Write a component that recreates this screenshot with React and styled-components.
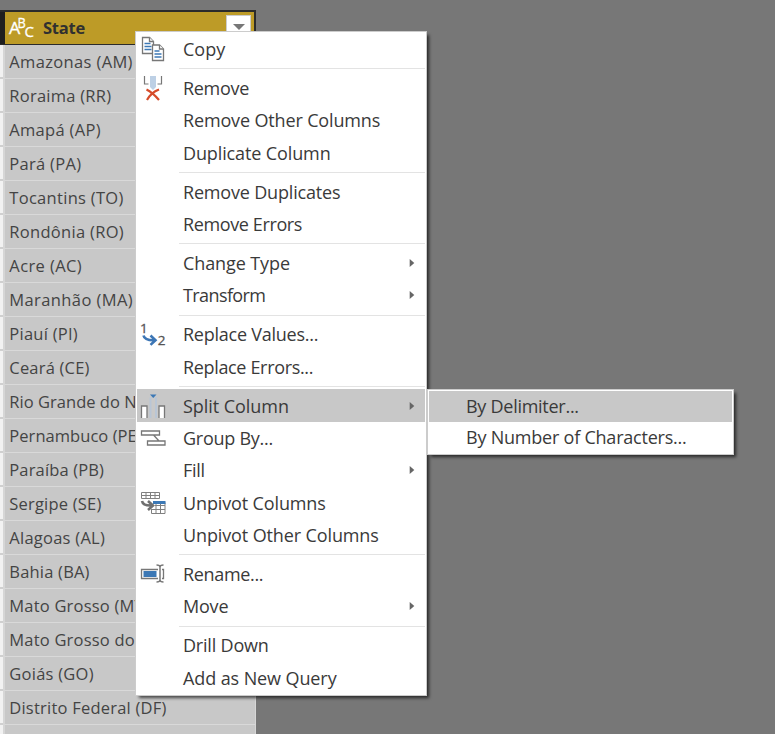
import React from 'react';
import styled, { createGlobalStyle } from 'styled-components';

const Global = createGlobalStyle`
  * { box-sizing: border-box; }
  body { margin: 0; background: #777; overflow: hidden; }
`;

const Screen = styled.main`
  position: relative;
  width: 775px;
  height: 734px;
  padding-top: 10px;
  overflow: hidden;
  background: #777;
  color: #3a3a3a;
  font-family: "Open Sans", "Noto Sans", sans-serif;
`;

const Grid = styled.section`
  display: grid;
  grid-template-columns: 3px 253px;
  width: 256px;
`;

const Header = styled.header`
  grid-column: 1 / -1;
  display: grid;
  grid-template-columns: 4px 1fr;
  height: 35px;
  border: 2px solid #2b2b2b;
  border-left-width: 0;
  border-bottom-width: 1px;
  background: #1f1f1f;
`;

const HeaderCell = styled.div`
  display: flex;
  align-items: center;
  margin-left: 1px;
  padding-left: 4px;
  background: #bd9b27;
  color: #303030;
  font-size: 16.5px;
  font-weight: 700;
  letter-spacing: -0.25px;
`;

const HeaderText = styled.span`
  margin-top: -2px;
`;

const TypeIcon = styled.svg`
  width: 25px;
  height: 24px;
  margin: -3px 9px 0 0;
  overflow: visible;
`;

const FilterButton = styled.button`
  align-self: flex-start;
  display: flex;
  justify-content: center;
  width: 25px;
  height: 25px;
  margin: 3px 3px 0 auto;
  padding: 8px 0 0;
  border: 1px solid #ccc;
  background: #fff;
`;

const Gutter = styled.div`
  height: 34px;
  background: #f2f2f2;
  border-bottom: 2px solid #d0d0d0;
`;

const Cell = styled.div`
  height: 34px;
  padding-left: 4.3px;
  border-left: 2px solid #d6d6d6;
  border-right: 1px solid #d6d6d6;
  border-bottom: 1px solid #d9d9d9;
  background: #c8c8c8;
  color: #444;
  font-size: 16.5px;
  font-weight: 500;
  line-height: 34px;
  letter-spacing: ${({ $track }) => $track || 0}px;
  white-space: pre;
`;

const Menu = styled.nav`
  position: absolute;
  left: 135px;
  top: 31px;
  width: 292px;
  height: 665px;
  padding: 1px;
  border: 1px solid #ccc;
  background: #fff;
  box-shadow: 3px 3px 3px -1px rgba(0, 0, 0, 0.65);
`;

const Item = styled.div`
  display: grid;
  grid-template-columns: 46px 1fr 16px;
  align-items: center;
  height: 32.4px;
  background: ${({ $active }) => ($active ? '#c8c8c8' : 'transparent')};
  font-size: 18px;
  line-height: 32px;
  white-space: nowrap;
`;

const Label = styled.span`
  letter-spacing: ${({ $track }) => $track || 0}px;
`;

const IconSlot = styled.span`
  display: flex;
  padding-left: 3px;
`;

const Divider = styled.div`
  height: 6.5px;
  margin-left: 42px;
  padding-top: 3px;
  &::before {
    content: '';
    display: block;
    height: 1px;
    background: #e3e3e3;
  }
`;

const Submenu = styled.nav`
  position: absolute;
  left: 427px;
  top: 389px;
  width: 307px;
  height: 66px;
  padding: 1px;
  border: 1px solid #ccc;
  background: #fff;
  box-shadow: 3px 3px 3px -1px rgba(0, 0, 0, 0.65);
`;

const SubItem = styled.div`
  height: 31px;
  padding-left: 37px;
  background: ${({ $active }) => ($active ? '#c8c8c8' : 'transparent')};
  font-size: 18px;
  line-height: 31px;
  letter-spacing: ${({ $track }) => $track || 0}px;
  white-space: nowrap;
`;

const Drawing = styled.svg`
  display: block;
  width: 26px;
  height: 28px;
  overflow: visible;
`;

const icons = {
  copy: (
    <g fill="#fff" stroke="#777" strokeWidth="1.3">
      <path d="M2.500 2.500h7l4 4v12h-11z" />
      <path d="M9.500 2.500v4h4" />
      <path d="M4.500 8.500h6M4.500 11.500h7M4.500 14.500h7" stroke="#3c78b5" />
      <path d="M12.500 10h7l4 4v11.500h-11z" />
      <path d="M19.500 10v4h4" />
      <path d="M14.500 16h5M14.500 19h7M14.500 22h7" stroke="#3c78b5" />
    </g>
  ),
  remove: (
    <g fill="none">
      <path d="M10 2h6v11l-3 3-3-3z" fill="#bdd0e5" />
      <path d="M4.500 2v8h4M21.500 2v8h-4" stroke="#777" strokeWidth="1.200" />
      <path d="M6.500 15.500q6 3 12.500 10.500M19 15.500q-8 3-12 10.500" stroke="#d64c2b" strokeWidth="2.200" />
    </g>
  ),
  replace: (
    <g>
      <g fill="#555" stroke="#555" strokeWidth=".3" fontSize="13.500">
        <text x="0" y="12.500">1</text>
        <text x="17.700" y="25">2</text>
      </g>
      <path d="M3.500 15.500q1 5 11 4.700M10.500 15.500l5 4.700-5 4.700" fill="none" stroke="#3d76b5" strokeWidth="2.600" />
    </g>
  ),
  split: (
    <g>
      <path d="M9.500 5.500h7.500v20.500h-7.500z" fill="#b9c6d6" />
      <path d="M11.500 6h3.500v20h-3.500z" fill="#c9c9c9" />
      <path d="M10 2.500h6.500l-3.250 3.500z" fill="#3c78b5" />
      <path d="M1.500 26V14h5.500V26M24.500 26V14h-5.500V26" fill="#fff" stroke="#777" strokeWidth="1.300" />
    </g>
  ),
  group: (
    <g fill="#fff" stroke="#777" strokeWidth="1.300">
      <path d="M1.500 7h18v4h-18zM7.500 17h17.500v4h-17.500zM13.500 11l5.500 6" />
    </g>
  ),
  unpivot: (
    <g fill="none">
      <path d="M1.500 3.500h18v6h-18zM1.500 6.500h18M6 3.500v6M10.500 3.500v6M15 3.500v6" stroke="#808080" />
      <path d="M11.500 20v4.500h13.500v-11M15 16.500h10M12 20.500h13M16 15v9M20.500 15v9" stroke="#808080" />
      <path d="M13 12h12.500v3H13z" fill="#3c78b5" />
      <path d="M2 12q1 5 10 4.500M8 12l5 4.500-5 4.500" stroke="#707070" strokeWidth="2.600" />
    </g>
  ),
  rename: (
    <g fill="none">
      <path d="M18 9.500H1.500v9H18M22 9.500h1.500v9H22" stroke="#777" strokeWidth="1.300" />
      <path d="M3.500 11h13v6h-13z" fill="#3c78b5" />
      <path d="M16.500 5q3.500 0 3.500 2v13q0 2-3.500 2M23.500 5Q20 5 20 7v13q0 2 3.500 2" stroke="#777" strokeWidth="1.500" />
    </g>
  ),
};

const rows = [
  ['Amazonas (AM)', 0.35],
  ['Roraima (RR)', 0.25],
  ['Amapá (AP)', 0.3],
  ['Pará (PA)', 0.3],
  ['Tocantins (TO)', 0.3],
  ['Rondônia (RO)', 0.3],
  ['Acre (AC)', 0.4],
  ['Maranhão (MA)', 0.4],
  ['Piauí (PI)', 0.25],
  ['Ceará (CE)', 0.2],
  ['Rio Grande do Norte (RN)', 0.03],
  ['Pernambuco (PE)', 0.05],
  ['Paraíba (PB)', 0.15],
  ['Sergipe (SE)', 0.2],
  ['Alagoas (AL)', 0.25],
  ['Bahia (BA)', 0.2],
  ['Mato Grosso (MT)', 0.2],
  ['Mato Grosso do Sul (MS)', 0.2],
  ['Goiás (GO)', 0.25],
  ['Distrito Federal (DF)', 0.22],
  ['', 0],
];

const groups = [
  [{ text: 'Copy', icon: 'copy' }],
  [
    { text: 'Remove', icon: 'remove', track: -0.3 },
    { text: 'Remove Other Columns', track: -0.15 },
    { text: 'Duplicate Column', track: -0.12 },
  ],
  [{ text: 'Remove Duplicates', track: -0.18 }, { text: 'Remove Errors', track: -0.38 }],
  [{ text: 'Change Type', more: true, track: -0.1 }, { text: 'Transform', more: true, track: -0.6 }],
  [
    { text: 'Replace Values...', icon: 'replace', track: -0.24 },
    { text: 'Replace Errors...', track: -0.34 },
  ],
  [
    { text: 'Split Column', icon: 'split', more: true, active: true, track: -0.05 },
    { text: 'Group By...', icon: 'group', track: -0.27 },
    { text: 'Fill', more: true, track: -0.3 },
    { text: 'Unpivot Columns', icon: 'unpivot', track: -0.13 },
    { text: 'Unpivot Other Columns', track: -0.12 },
  ],
  [{ text: 'Rename...', icon: 'rename', track: -0.33 }, { text: 'Move', more: true, track: -0.2 }],
  [{ text: 'Drill Down', track: -0.2 }, { text: 'Add as New Query', track: -0.1 }],
];

function MenuItem({ item }) {
  return (
    <Item $active={item.active}>
      <IconSlot>
        {item.icon && <Drawing viewBox="0 0 26 28">{icons[item.icon]}</Drawing>}
      </IconSlot>
      <Label $track={item.track}>{item.text}</Label>
      {item.more && (
        <svg width="6" height="10" viewBox="0 0 6 10"><path d="M.7 1l4.600 4-4.600 4z" fill="#666" /></svg>
      )}
    </Item>
  );
}

export default function App() {
  return (
    <Screen>
      <Global />
      <Grid>
        <Header>
          <span />
          <HeaderCell>
            <TypeIcon viewBox="0 0 25 24" fill="#fff" stroke="#fff" strokeWidth=".3" fontWeight="400">
              <text x="0" y="18.500" fontSize="17" textLength="11" lengthAdjust="spacingAndGlyphs">A</text>
              <text x="8.500" y="13" fontSize="14" textLength="8" lengthAdjust="spacingAndGlyphs">B</text>
              <text x="15.500" y="22" fontSize="15">C</text>
            </TypeIcon>
            <HeaderText>State</HeaderText>
            <FilterButton aria-label="Filter">
              <svg width="12" height="6" viewBox="0 0 12 6"><path d="M0 0h12L6 6z" fill="#777" /></svg>
            </FilterButton>
          </HeaderCell>
        </Header>
        {rows.map(([text, track], i) => (
          <React.Fragment key={i}>
            <Gutter />
            <Cell $track={track}>{text}</Cell>
          </React.Fragment>
        ))}
      </Grid>
      <Menu>
        {groups.map((items, i) => (
          <React.Fragment key={i}>
            {i > 0 && <Divider />}
            {items.map((item) => <MenuItem key={item.text} item={item} />)}
          </React.Fragment>
        ))}
      </Menu>
      <Submenu>
        <SubItem $active $track={-0.27}>By Delimiter...</SubItem>
        <SubItem $track={-0.22}>By Number of Characters...</SubItem>
      </Submenu>
    </Screen>
  );
}
